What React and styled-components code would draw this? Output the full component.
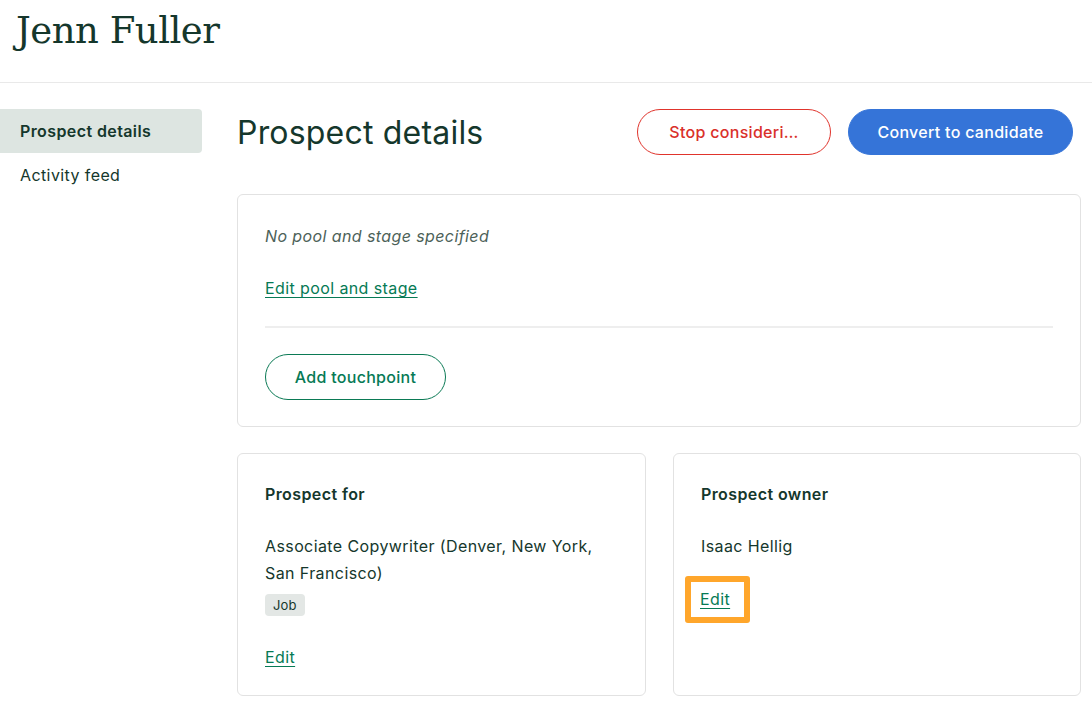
import React from 'react'
import styled, { createGlobalStyle } from 'styled-components'

const GlobalStyle = createGlobalStyle`
  html, body { margin: 0; padding: 0; background: #fff; }
  body {
    font-family: Inter, "Liberation Sans", Arial, sans-serif;
    color: #15372c;
    letter-spacing: 0.4px;
    -webkit-font-smoothing: antialiased;
  }
  * { box-sizing: border-box; }
`

const Page = styled.div`
  width: 1092px;
  min-height: 704px;
  overflow: hidden;
`

const Header = styled.header`
  height: 83px;
  padding: 6px 16px 0;
  border-bottom: 1px solid #e9e9e9;
`

const Name = styled.h1`
  margin: 0;
  font-family: "DejaVu Serif", "Liberation Serif", serif;
  font-weight: 400;
  font-size: 37px;
  letter-spacing: -0.5px;
  line-height: 50px;
  color: #15372c;
`

const Body = styled.div`
  display: flex;
  padding-top: 26px;
`

const Sidebar = styled.nav`
  width: 202px;
  flex-shrink: 0;
  display: flex;
  flex-direction: column;
`

const NavItem = styled.div`
  height: 44px;
  display: flex;
  align-items: center;
  padding-left: 20px;
  font-size: 16px;
  font-weight: ${p => (p.$active ? 600 : 400)};
  background: ${p => (p.$active ? '#dde5e1' : 'transparent')};
  border-radius: 0 4px 4px 0;
  color: #15372c;
`

const Main = styled.main`
  margin-left: 35px;
  width: 844px;
  display: flex;
  flex-direction: column;
`

const TitleRow = styled.div`
  display: flex;
  align-items: center;
  height: 46px;
  margin-bottom: 39px;
`

const Title = styled.h2`
  margin: 0;
  flex: 1;
  font-weight: 400;
  font-size: 32px;
  letter-spacing: 0.2px;
  color: #15372c;
`

const Pill = styled.button`
  height: 46px;
  border-radius: 23px;
  font-family: inherit;
  font-size: 16px;
  font-weight: 500;
  letter-spacing: 0.3px;
  padding: 0;
  cursor: pointer;
`

const StopButton = styled(Pill)`
  width: 194px;
  background: #fff;
  border: 1px solid #e0342c;
  color: #d9302a;
  margin-right: 17px;
`

const ConvertButton = styled(Pill)`
  width: 225px;
  background: #3574d8;
  border: 1px solid #3574d8;
  color: #fff;
  margin-right: 8px;
`

const Card = styled.section`
  border: 1px solid #e2e2e2;
  border-radius: 6px;
  padding: 27px 27px;
  background: #fff;
`

const PoolCard = styled(Card)`
  height: 233px;
  padding-top: 29px;
`

const Muted = styled.p`
  margin: 0;
  font-style: italic;
  font-size: 16px;
  color: #4d6259;
  line-height: 24px;
`

const TextLink = styled.a`
  display: inline-block;
  color: #067a55;
  font-size: 16px;
  line-height: 24px;
  text-decoration: underline;
  text-underline-offset: 3px;
  text-decoration-thickness: 1px;
  cursor: pointer;
`

const PoolLink = styled(TextLink)`
  margin-top: 28px;
`

const Divider = styled.hr`
  border: none;
  border-top: 2px solid #eeeeee;
  margin: 26px 0 26px;
`

const OutlineButton = styled(Pill)`
  width: 181px;
  background: #fff;
  border: 1px solid #0b7a55;
  color: #067a55;
`

const CardRow = styled.div`
  display: grid;
  grid-template-columns: 409px 408px;
  gap: 27px;
  margin-top: 26px;
`

const InfoCard = styled(Card)`
  height: 243px;
  padding-top: 28px;
`

const CardTitle = styled.h3`
  margin: 0;
  font-size: 16px;
  font-weight: 600;
  line-height: 24px;
  color: #15372c;
`

const Text = styled.p`
  margin: 27px 0 0;
  font-size: 16px;
  line-height: 27px;
  color: #15372c;
`

const Tag = styled.span`
  display: inline-block;
  margin-top: 7px;
  background: #e3e7e5;
  border-radius: 4px;
  padding: 0 8px;
  font-size: 13px;
  letter-spacing: 0.2px;
  line-height: 22px;
  color: #15372c;
`

const Stack = styled.div`
  display: flex;
  flex-direction: column;
  align-items: flex-start;
`

const EditLink = styled(TextLink)`
  margin-top: ${p => p.$top}px;
`

const Highlight = styled.div`
  margin: 16px 0 0 -16px;
  padding: 5px 14px 6px 9px;
  border: 6px solid #ffa62b;
  border-radius: 3px;
`

export default function App() {
  return (
    <Page>
      <GlobalStyle />
      <Header>
        <Name>Jenn Fuller</Name>
      </Header>
      <Body>
        <Sidebar>
          <NavItem $active>Prospect details</NavItem>
          <NavItem>Activity feed</NavItem>
        </Sidebar>
        <Main>
          <TitleRow>
            <Title>Prospect details</Title>
            <StopButton>Stop consideri…</StopButton>
            <ConvertButton>Convert to candidate</ConvertButton>
          </TitleRow>
          <PoolCard>
            <Muted>No pool and stage specified</Muted>
            <PoolLink>Edit pool and stage</PoolLink>
            <Divider />
            <OutlineButton>Add touchpoint</OutlineButton>
          </PoolCard>
          <CardRow>
            <InfoCard>
              <Stack>
                <CardTitle>Prospect for</CardTitle>
                <Text>
                  Associate Copywriter (Denver, New York,
                  <br />
                  San Francisco)
                </Text>
                <Tag>Job</Tag>
                <EditLink $top={29}>Edit</EditLink>
              </Stack>
            </InfoCard>
            <InfoCard>
              <Stack>
                <CardTitle>Prospect owner</CardTitle>
                <Text>Isaac Hellig</Text>
                <Highlight>
                  <TextLink>Edit</TextLink>
                </Highlight>
              </Stack>
            </InfoCard>
          </CardRow>
        </Main>
      </Body>
    </Page>
  )
}
